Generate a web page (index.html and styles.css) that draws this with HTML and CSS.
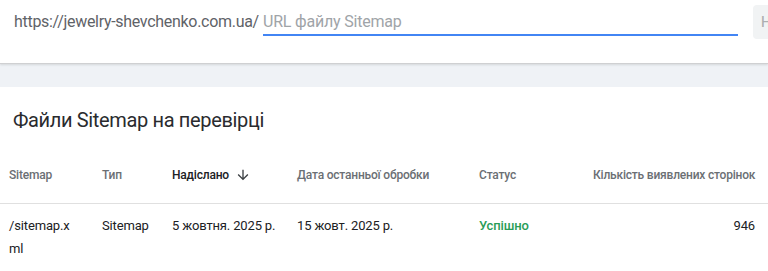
FILE: index.html
```html
<!DOCTYPE html>
<html lang="uk">
<head>
<meta charset="utf-8">
<link rel="stylesheet" href="styles.css">
</head>
<body>
<div class="top">
  <span class="prefix">https://jewelry-shevchenko.com.ua/</span>
  <div class="input"><span class="ph">URL файлу Sitemap</span></div>
  <button class="submit">НАДІСЛАТИ</button>
</div>
<div class="band"></div>
<section class="card">
  <h2 class="title">Файли Sitemap на перевірці</h2>
  <div class="table">
    <div class="row head">
      <div class="cell">Sitemap</div>
      <div class="cell">Тип</div>
      <div class="cell sorted">Надіслано
        <svg class="arrow" viewBox="0 0 24 24" width="16" height="16"><path d="M20 12l-1.41-1.41L13 16.17V4h-2v12.17l-5.58-5.59L4 12l8 8 8-8z"/></svg>
      </div>
      <div class="cell">Дата останньої обробки</div>
      <div class="cell">Статус</div>
      <div class="cell num">Кількість виявлених сторінок</div>
    </div>
    <div class="row data">
      <div class="cell"><span class="path">/sitemap.xml</span></div>
      <div class="cell">Sitemap</div>
      <div class="cell">5 жовтня. 2025 р.</div>
      <div class="cell">15 жовт. 2025 р.</div>
      <div class="cell ok">Успішно</div>
      <div class="cell num">946</div>
    </div>
  </div>
</section>
</body>
</html>
```
FILE: styles.css
```css
html, body {
  margin: 0;
  padding: 0;
  background: #ffffff;
}
body {
  width: 768px;
  height: 271px;
  overflow: hidden;
  font-family: Roboto, "Noto Sans", Arial, sans-serif;
  color: #202124;
}
.top {
  display: flex;
  align-items: flex-start;
  height: 63px;
  padding-left: 14px;
  background: #fff;
  border-bottom: 1px solid #cfd0d2;
  box-shadow: 0 1px 2px rgba(60, 64, 67, 0.15);
  position: relative;
  z-index: 1;
  white-space: nowrap;
}
.prefix {
  flex: 0 0 249px;
  min-width: 0;
  margin-top: 12px;
  font-size: 16px;
  line-height: 20px;
  letter-spacing: -0.3px;
  color: #5f6368;
}
.input {
  flex: 0 0 475px;
  margin-top: 12px;
  height: 20px;
  padding-bottom: 2px;
  border-bottom: 2px solid #4285f4;
  font-size: 16px;
  line-height: 20px;
  letter-spacing: -0.2px;
}
.ph {
  color: #a0a4a8;
}
.submit {
  flex: 0 0 auto;
  margin-top: 5px;
  margin-left: 15px;
  height: 34px;
  padding: 0 8px;
  border: none;
  border-radius: 4px;
  background: #f1f3f4;
  font-family: Roboto, Arial, sans-serif;
  font-size: 14px;
  font-weight: 500;
  color: rgba(60, 64, 67, 0.38);
}
.band {
  height: 23px;
  background: #eff2f6;
}
.card {
  background: #fff;
  padding-top: 21px;
}
.title {
  margin: 0 0 0 13px;
  font-size: 20px;
  line-height: 24px;
  letter-spacing: -0.35px;
  font-weight: 400;
  color: #2a2b2e;
}
.table {
  margin-top: 15px;
}
.row {
  display: grid;
  grid-template-columns: 93px 70px 125px 182px 114px 162px;
  padding-left: 9px;
}
.head {
  height: 56px;
  align-items: center;
  border-bottom: 1px solid #e0e0e0;
  font-size: 12px;
  line-height: 16px;
  letter-spacing: -0.2px;
  font-weight: 500;
  color: #6b6f74;
}
.sorted {
  color: #202124;
  display: flex;
  align-items: center;
  gap: 6px;
}
.arrow {
  fill: #3c4043;
}
.data {
  padding-top: 10px;
  font-size: 13px;
  line-height: 23px;
  letter-spacing: -0.15px;
  color: #202124;
}
.path {
  display: block;
  width: 66px;
  word-break: break-all;
}
.num {
  text-align: right;
  white-space: nowrap;
}
.ok {
  color: #2a9d57;
  font-weight: 500;
}
```
